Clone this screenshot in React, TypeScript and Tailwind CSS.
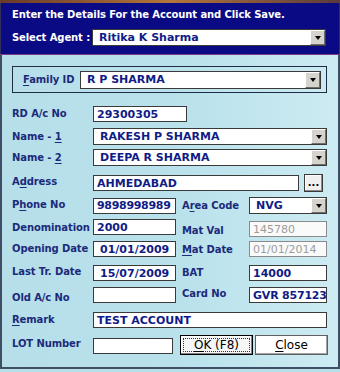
import React from 'react';

const FONT = "'DejaVu Sans', Verdana, 'Liberation Sans', sans-serif";

interface BoxProps {
  value?: string;
  className?: string;
  disabled?: boolean;
}

const TextBox = ({ value = '', className = '', disabled = false }: BoxProps) => (
  <div
    className={`h-[16px] border border-[#3a3a3a] flex items-center pl-[3px] text-[11px] leading-none whitespace-nowrap overflow-hidden ${
      disabled ? 'bg-[#fafafa] text-[#9c9c9c] font-normal border-[#8a8a8a]' : 'bg-white text-[#101c86] font-bold'
    } ${className}`}
  >
    {value}
  </div>
);

const ComboBox = ({ value = '', className = '' }: BoxProps) => (
  <div className={`h-[17px] border border-[#3a3a3a] bg-white flex items-stretch ${className}`}>
    <div className="flex-1 flex items-center pl-[6px] text-[11px] font-bold text-[#101c86] leading-none whitespace-nowrap overflow-hidden">
      {value}
    </div>
    <div className="w-[15px] bg-[#d6d3cc] border-l border-t border-white border-r border-b border-r-[#6e6e6e] border-b-[#6e6e6e] flex items-center justify-center">
      <div className="w-0 h-0 border-l-[3.5px] border-r-[3.5px] border-t-[4px] border-l-transparent border-r-transparent border-t-black" />
    </div>
  </div>
);

const Label = ({ children, className = '' }: { children: React.ReactNode; className?: string }) => (
  <div className={`text-[10px] font-bold text-[#1c2a7a] leading-none whitespace-nowrap tracking-[-0.1px] ${className}`}>{children}</div>
);

const U = ({ children }: { children: React.ReactNode }) => <span className="underline underline-offset-2">{children}</span>;

export default function App() {
  return (
    <div className="w-[340px] h-[372px] bg-[#b6dfe9] flex flex-col overflow-hidden" style={{ fontFamily: FONT }}>
      <div className="h-[3px] bg-gradient-to-r from-[#6a3a2a] via-[#b5763a] to-[#5a3a3a]" />
      <div className="h-[51px] bg-[#0a0a84] px-[11px] pt-[7px] border-l border-r border-[#30305a]">
        <div className="text-[10px] font-bold text-white leading-none tracking-[-0.1px]">Enter the Details For the Account and Click Save.</div>
        <div className="flex items-center mt-[9px]">
          <div className="w-[80px] text-[10px] font-bold text-white leading-none tracking-[-0.1px]">Select Agent :</div>
          <ComboBox value="Ritika K Sharma" className="w-[234px] h-[17px]" />
        </div>
      </div>
      <div className="h-px bg-[#7a3f86]" />
      <div className="flex-1 flex flex-col border-l-2 border-r-2 border-b-2 border-[#3e4e66] mb-[3px] bg-gradient-to-r from-[#b6dfe9] via-[#b8e1eb] to-[#cdebf2] pl-[10px]">
        <div className="mt-[11px] w-[315px] h-[27px] border border-[#1e2e44] flex items-center pl-[10px]">
          <Label className="w-[57px]">
            <U>F</U>amily ID
          </Label>
          <ComboBox value="R P SHARMA" className="w-[241px] h-[18px]" />
        </div>

        <div className="flex items-center mt-[13px]">
          <Label className="w-[81px]">RD A/c No</Label>
          <TextBox value="29300305" className="w-[94px]" />
        </div>

        <div className="flex items-center mt-[6px]">
          <Label className="w-[81px]">
            Name - <U>1</U>
          </Label>
          <ComboBox value="RAKESH P SHARMA" className="w-[234px]" />
        </div>

        <div className="flex items-center mt-[4px]">
          <Label className="w-[81px]">
            Name - <U>2</U>
          </Label>
          <ComboBox value="DEEPA R SHARMA" className="w-[234px]" />
        </div>

        <div className="flex items-center mt-[8px]">
          <Label className="w-[81px] -mt-[3px]">
            A<U>d</U>dress
          </Label>
          <TextBox value="AHMEDABAD" className="w-[206px]" />
          <div className="ml-[5px] w-[19px] h-[18px] border border-[#3a3a3a] bg-[#f0f0f0] shadow-[inset_-1px_-1px_0_#8a8a8a,inset_1px_1px_0_#ffffff] flex items-end justify-center text-[10px] font-bold text-black leading-none pb-[3px]">
            ...
          </div>
        </div>

        <div className="flex items-center mt-[5px]">
          <Label className="w-[81px] -mt-[2px]">
            P<U>h</U>one No
          </Label>
          <TextBox value="9898998989" className="w-[83px] pl-[2px] tracking-[-0.3px]" />
          <Label className="w-[67px] ml-[6px] mt-[1px]">
            A<U>r</U>ea Code
          </Label>
          <ComboBox value="NVG" className="w-[78px]" />
        </div>

        <div className="flex items-start mt-[5px] h-[19px]">
          <Label className="w-[81px] mt-[4px]">Denomination</Label>
          <TextBox value="2000" className="w-[83px] pl-[2px]" />
          <Label className="w-[67px] ml-[6px] mt-[7px]">Mat Val</Label>
          <TextBox value="145780" disabled className="w-[78px] mt-[2px]" />
        </div>

        <div className="flex items-center mt-[3px]">
          <Label className="w-[81px]">Opening Date</Label>
          <TextBox value="01/01/2009" className="w-[83px] pl-[6px]" />
          <Label className="w-[67px] ml-[6px] mt-[2px]">
            <U>M</U>at Date
          </Label>
          <TextBox value="01/01/2014" disabled className="w-[78px]" />
        </div>

        <div className="flex items-center mt-[8px]">
          <Label className="w-[81px] -mt-[3px]">Last Tr. Date</Label>
          <TextBox value="15/07/2009" className="w-[83px] pl-[6px]" />
          <Label className="w-[67px] ml-[6px]">BAT</Label>
          <TextBox value="14000" className="w-[78px]" />
        </div>

        <div className="flex items-center mt-[6px]">
          <Label className="w-[81px] mt-[6px]">Old A/c No</Label>
          <TextBox className="w-[83px]" />
          <Label className="w-[67px] ml-[6px] -mt-[3px]">Card No</Label>
          <TextBox value="GVR 857123" className="w-[78px] pl-[2px] text-[10px] tracking-[-0.2px]" />
        </div>

        <div className="flex items-center mt-[9px]">
          <Label className="w-[81px]">
            <U>R</U>emark
          </Label>
          <TextBox value="TEST ACCOUNT" className="w-[234px] pl-[2px]" />
        </div>

        <div className="flex items-center mt-[7px]">
          <Label className="w-[81px] -mt-[3px]">LOT Number</Label>
          <TextBox className="w-[80px] mt-[2px]" />
          <div className="ml-[7px] w-[73px] h-[20px] border border-black bg-[#f6f6f6] shadow-[inset_-1px_-1px_0_#808080,inset_1px_1px_0_#ffffff] flex items-center justify-center p-[2px]">
            <div className="w-full h-full border border-dotted border-[#333] flex items-center justify-center text-[12px] text-black leading-none">
              <U>O</U>K (F8)
            </div>
          </div>
          <div className="ml-[2px] w-[73px] h-[20px] border border-[#606060] bg-white shadow-[inset_-1px_-1px_0_#a0a0a0] flex items-center justify-center text-[12px] text-black leading-none">
            <U>C</U>lose
          </div>
        </div>
      </div>
    </div>
  );
}
